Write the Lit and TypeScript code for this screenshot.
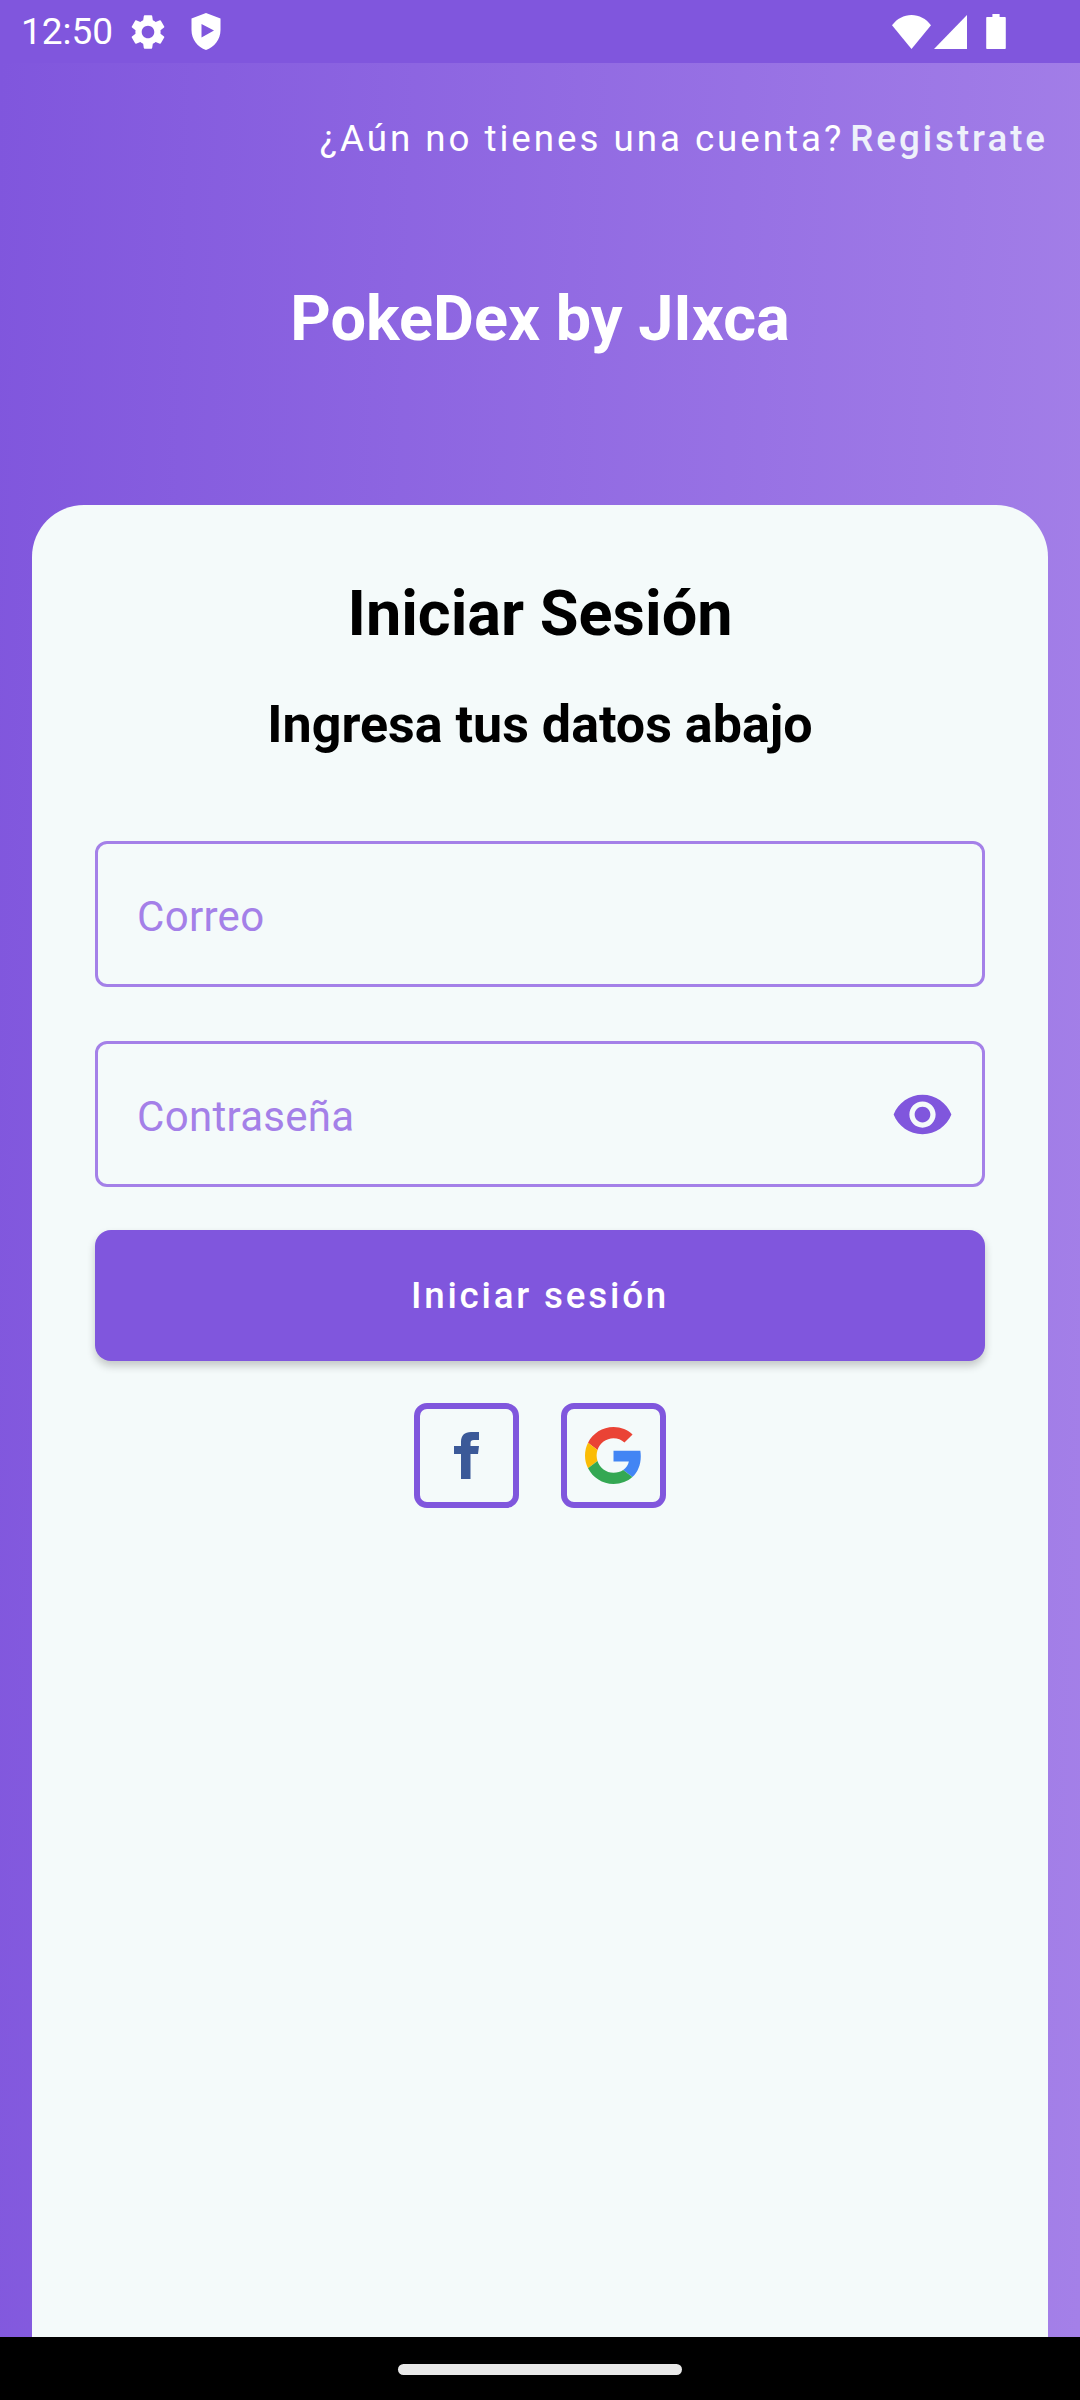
import { LitElement, html, css } from "lit";
import { customElement } from "lit/decorators.js";

@customElement("app-root")
export class AppRoot extends LitElement {
  static styles = css`
    :host { display: block; width: 1080px; height: 2400px; font-family: Roboto, sans-serif; }
    .page { width: 1080px; height: 2400px; display: flex; flex-direction: column; background: #000; overflow: hidden; }
    .status { height: 63px; flex: none; background: #8056dd; color: #fff; display: flex; align-items: center; padding: 0 0 0 21px; box-sizing: border-box; }
    .time { font-size: 37px; line-height: 63px; width: 90px; }
    .status svg { display: block; flex: none; fill: #fff; }
    .gear { margin-left: 16px; }
    .shield { margin-left: 22px; }
    .spacer { flex: 1; }
    .wifi { margin-right: 3px; }
    .signal { margin-right: 19px; }
    .battery { margin-right: 74px; }
    .main { flex: 1; display: flex; flex-direction: column; min-height: 0; background: linear-gradient(92deg, #8056dd 0%, #a480e8 100%); }
    .link { display: flex; justify-content: flex-end; align-items: center; height: 42px; margin-top: 54px; padding-right: 32px; color: #fff; font-size: 36.75px; letter-spacing: 2.95px; gap: 6px; }
    .link b { font-weight: 500; color: #eef1fb; }
    .brand { margin: 0; margin-top: 123px; height: 74px; line-height: 74px; text-align: center; color: #fff; font-size: 63px; font-weight: 700; }
    .card { flex: 1; margin: 149px 32px 0; background: #f4fafa; border-radius: 52px 52px 0 0; padding: 0 63px; display: flex; flex-direction: column; }
    h1 { margin: 72px 0 0; height: 74px; line-height: 74px; text-align: center; font-size: 63px; font-weight: 700; color: #000; }
    h2 { margin: 44px 0 0; height: 60px; line-height: 60px; text-align: center; font-size: 52px; font-weight: 700; color: #000; }
    .field { height: 146px; box-sizing: border-box; border: 3px solid #a480e8; border-radius: 12px; display: flex; align-items: center; justify-content: space-between; padding: 0 28px 0 39px; color: #a480e8; font-size: 42px; letter-spacing: 0.3px; }
    .field span { padding-top: 4px; }
    .mail { margin-top: 86px; }
    .pass { margin-top: 54px; }
    .field svg { display: block; fill: #8056dd; }
    .btn { margin-top: 43px; height: 131px; border: 0; border-radius: 16px; background: #8056dd; color: #fff; font: 500 36.75px Roboto, sans-serif; letter-spacing: 2.8px; box-shadow: 0 5px 9px rgba(0,0,0,.2); display: flex; align-items: center; justify-content: center; }
    .social { display: flex; justify-content: center; gap: 42px; margin-top: 42px; }
    .box { width: 105px; height: 105px; box-sizing: border-box; border: 6px solid #8056dd; border-radius: 13px; display: flex; align-items: center; justify-content: center; }
    .nav { height: 63px; flex: none; background: #000; display: flex; align-items: center; justify-content: center; }
    .pill { width: 284px; height: 11px; border-radius: 6px; background: #e9e9e9; margin-top: 1px; }
  `;

  render() {
    return html`<div class="page">
      <div class="status">
        <span class="time">12:50</span>
        <svg class="gear" width="42" height="42" viewBox="0 0 24 24"><path d="M19.14 12.94c.04-.3.06-.61.06-.94 0-.32-.02-.64-.07-.94l2.03-1.58a.49.49 0 0 0 .12-.61l-1.92-3.32a.488.488 0 0 0-.59-.22l-2.39.96c-.5-.38-1.03-.7-1.62-.94l-.36-2.54a.484.484 0 0 0-.48-.41h-3.84c-.24 0-.43.17-.47.41l-.36 2.54c-.59.24-1.13.57-1.62.94l-2.39-.96c-.22-.08-.47 0-.59.22L2.74 8.87c-.12.21-.08.47.12.61l2.03 1.58c-.05.3-.09.63-.09.94s.02.64.07.94l-2.03 1.58a.49.49 0 0 0-.12.61l1.92 3.32c.12.22.37.29.59.22l2.39-.96c.5.38 1.03.7 1.62.94l.36 2.54c.05.24.24.41.48.41h3.84c.24 0 .44-.17.47-.41l.36-2.54c.59-.24 1.13-.56 1.62-.94l2.39.96c.22.08.47 0 .59-.22l1.92-3.32c.12-.22.07-.47-.12-.61l-2.01-1.58zM12 15.6c-1.98 0-3.6-1.62-3.6-3.6s1.62-3.6 3.6-3.6 3.6 1.62 3.6 3.6-1.62 3.6-3.6 3.6z"/></svg>
        <svg class="shield" width="30" height="37" viewBox="0 0 29 37"><path fill-rule="evenodd" d="M14.500 0 29 5.500V17c0 9.300-6.200 17.200-14.500 20C6.200 34.200 0 26.300 0 17V5.500ZM10 11V24.500L22.500 17.500Z"/></svg>
        <span class="spacer"></span>
        <svg class="wifi" width="39" height="34" viewBox="0 0 38 33"><path d="M0 10C5 3.500 11.500 0 19 0s14 3.500 19 10L19 33Z"/></svg>
        <svg class="signal" width="33" height="34" viewBox="0 0 32 33"><path d="M32 0V33H0Z"/></svg>
        <svg class="battery" width="20" height="35" viewBox="0 0 19 34"><path d="M6 0H13V3H18C18.600 3 19 3.400 19 4V33C19 33.600 18.600 34 18 34H1C.4 34 0 33.600 0 33V4C0 3.400 .4 3 1 3H6Z"/></svg>
      </div>
      <div class="main">
        <div class="link"><span>¿Aún no tienes una cuenta?</span><b>Registrate</b></div>
        <div class="brand">PokeDex by JIxca</div>
        <div class="card">
          <h1>Iniciar Sesión</h1>
          <h2>Ingresa tus datos abajo</h2>
          <div class="field mail"><span>Correo</span></div>
          <div class="field pass"><span>Contraseña</span>
            <svg width="63" height="63" viewBox="0 0 24 24"><path d="M12 4.500C7 4.500 2.730 7.610 1 12c1.730 4.390 6 7.500 11 7.500s9.270-3.110 11-7.500c-1.730-4.390-6-7.500-11-7.500zM12 17c-2.760 0-5-2.240-5-5s2.240-5 5-5 5 2.240 5 5-2.240 5-5 5zm0-8c-1.660 0-3 1.340-3 3s1.340 3 3 3 3-1.340 3-3-1.340-3-3-3z"/></svg>
          </div>
          <div class="btn">Iniciar sesión</div>
          <div class="social">
            <div class="box"><svg width="25" height="47" viewBox="0 0 25 47"><path fill="#3b5998" d="M7 47V22H0V14H7V10C7 3.500 10.500 0 17 0H25V8H20C17.500 8 16.500 9 16.500 11V14H25L24 22H16.500V47Z"/></svg></div>
            <div class="box"><svg width="57" height="57" viewBox="0 0 48 48">
              <path fill="#EA4335" d="M24 9.500c3.540 0 6.710 1.220 9.210 3.600l6.850-6.850C35.900 2.380 30.470 0 24 0 14.620 0 6.510 5.380 2.560 13.220l7.980 6.190C12.430 13.720 17.740 9.500 24 9.500z"/>
              <path fill="#4285F4" d="M46.980 24.550c0-1.570-.15-3.090-.38-4.550H24v9.020h12.940c-.58 2.960-2.260 5.480-4.780 7.180l7.730 6c4.510-4.180 7.090-10.360 7.090-17.650z"/>
              <path fill="#FBBC05" d="M10.530 28.590c-.48-1.450-.76-2.990-.76-4.590s.27-3.140.76-4.590l-7.980-6.190C.92 16.460 0 20.120 0 24c0 3.880.92 7.540 2.560 10.780l7.970-6.190z"/>
              <path fill="#34A853" d="M24 48c6.480 0 11.930-2.130 15.890-5.810l-7.730-6c-2.150 1.450-4.920 2.300-8.160 2.300-6.260 0-11.570-4.220-13.470-9.910l-7.980 6.190C6.510 42.620 14.620 48 24 48z"/>
            </svg></div>
          </div>
        </div>
      </div>
      <div class="nav"><div class="pill"></div></div>
    </div>`;
  }
}
